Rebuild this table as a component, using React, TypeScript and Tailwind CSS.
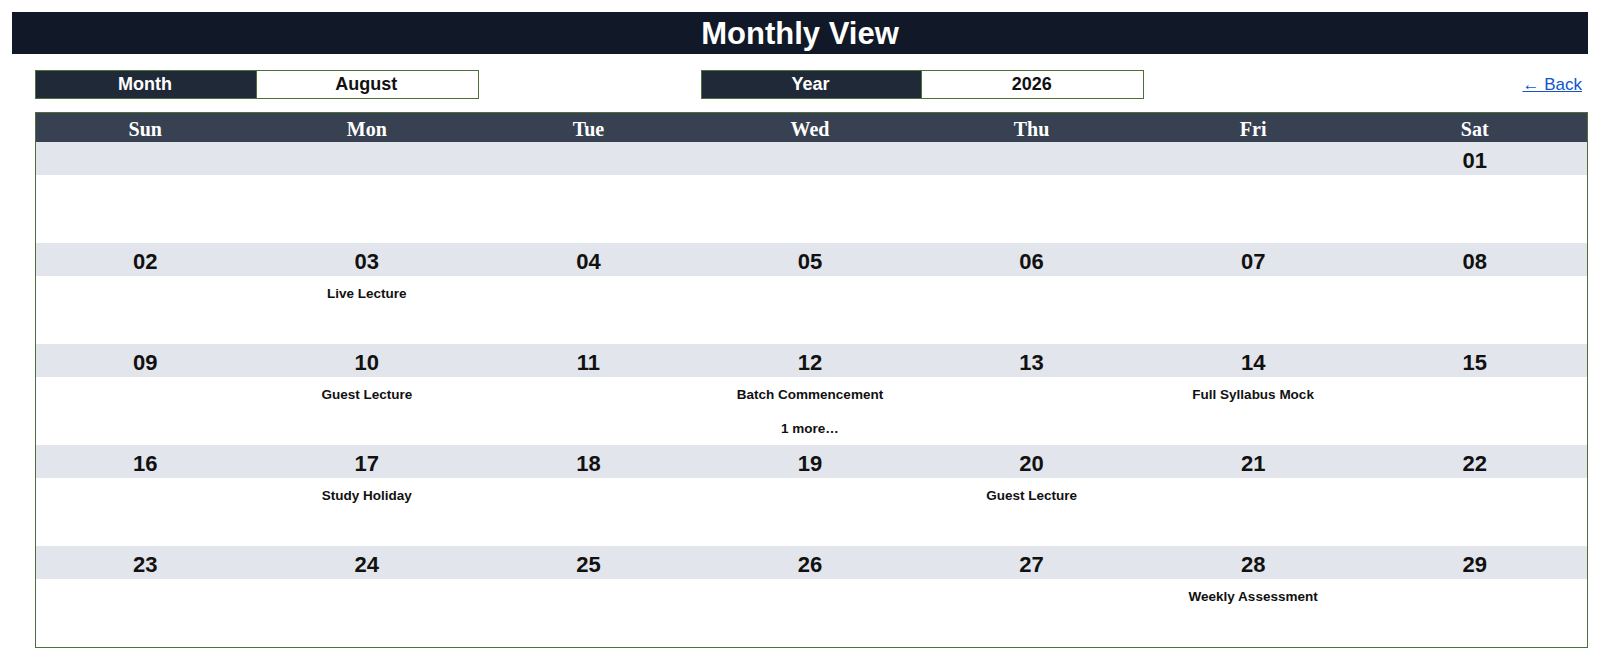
import React from "react";

const days = ["Sun", "Mon", "Tue", "Wed", "Thu", "Fri", "Sat"];

type Cell = { d: string; events: string[] };

const weeks: Cell[][] = [
  [
    { d: "", events: [] },
    { d: "", events: [] },
    { d: "", events: [] },
    { d: "", events: [] },
    { d: "", events: [] },
    { d: "", events: [] },
    { d: "01", events: [] },
  ],
  [
    { d: "02", events: [] },
    { d: "03", events: ["Live Lecture"] },
    { d: "04", events: [] },
    { d: "05", events: [] },
    { d: "06", events: [] },
    { d: "07", events: [] },
    { d: "08", events: [] },
  ],
  [
    { d: "09", events: [] },
    { d: "10", events: ["Guest Lecture"] },
    { d: "11", events: [] },
    { d: "12", events: ["Batch Commencement", "1 more…"] },
    { d: "13", events: [] },
    { d: "14", events: ["Full Syllabus Mock"] },
    { d: "15", events: [] },
  ],
  [
    { d: "16", events: [] },
    { d: "17", events: ["Study Holiday"] },
    { d: "18", events: [] },
    { d: "19", events: [] },
    { d: "20", events: ["Guest Lecture"] },
    { d: "21", events: [] },
    { d: "22", events: [] },
  ],
  [
    { d: "23", events: [] },
    { d: "24", events: [] },
    { d: "25", events: [] },
    { d: "26", events: [] },
    { d: "27", events: [] },
    { d: "28", events: ["Weekly Assessment"] },
    { d: "29", events: [] },
  ],
];

const sans = "font-['Liberation_Sans',Arial,sans-serif]";

export default function App() {
  return (
    <div className={`bg-white w-[1600px] h-[661px] pt-[12px] px-[12px] ${sans}`}>
      <div className="h-[42px] bg-[#111827] flex items-center justify-center">
        <span className="text-white font-bold text-[31px] leading-none">Monthly View</span>
      </div>
      <div className="pl-[23px]">
        <div className="mt-[16px] grid grid-cols-7 h-[28px]">
          <div className="bg-[#1f2937] border border-[#4e6e3a] flex items-center justify-center text-white font-bold text-[18px] pr-[2px]">
            Month
          </div>
          <div className="bg-white border border-l-0 border-[#4e6e3a] flex items-center justify-center text-[#111] font-bold text-[18px] pr-[2px]">
            August
          </div>
          <div />
          <div className="bg-[#1f2937] border border-[#4e6e3a] flex items-center justify-center text-white font-bold text-[18px] pr-[2px]">
            Year
          </div>
          <div className="bg-white border border-l-0 border-[#4e6e3a] flex items-center justify-center text-[#111] font-bold text-[18px] pr-[2px]">
            2026
          </div>
          <div />
          <div className="flex items-center justify-end pr-[6px]">
            <a href="#" className="text-[#1155cc] underline text-[17px] leading-none">
              ← Back
            </a>
          </div>
        </div>
        <div className="mt-[14px] border border-[#4e6e3a]">
          <div className="grid grid-cols-7 h-[29px] bg-[#374151]">
            {days.map((d) => (
              <div
                key={d}
                className="flex items-center justify-center pt-[1px] pr-[3px] text-white font-bold text-[20px] font-['Liberation_Serif','Times_New_Roman',serif]"
              >
                {d}
              </div>
            ))}
          </div>
          {weeks.map((w, i) => (
            <div key={i} className="h-[101px] flex flex-col">
              <div className="grid grid-cols-7 h-[33px] bg-[#e2e5eb]">
                {w.map((c, j) => (
                  <div key={j} className="flex items-center justify-center pt-[2px] pr-[3px] text-[#111] font-bold text-[22px]">
                    {c.d}
                  </div>
                ))}
              </div>
              <div className="grid grid-cols-7 flex-1 bg-white pt-[1px]">
                {w.map((c, j) => (
                  <div key={j} className="flex flex-col items-center pr-[3px]">
                    {c.events.map((e) => (
                      <div key={e} className="h-[34px] flex items-center text-[#111] font-bold text-[13.5px]">
                        {e}
                      </div>
                    ))}
                  </div>
                ))}
              </div>
            </div>
          ))}
        </div>
      </div>
    </div>
  );
}
